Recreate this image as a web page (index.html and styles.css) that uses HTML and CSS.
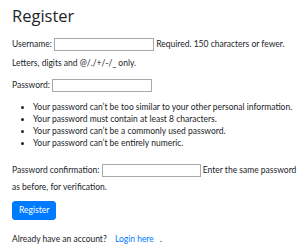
FILE: index.html
```html
<!DOCTYPE html>
<html>
<head>
<meta charset="utf-8">
<link rel="stylesheet" href="styles.css">
</head>
<body>
<div class="page">
  <h2 class="title">Register</h2>
  <form class="form">
    <p class="field"><label>Username:</label> <input type="text" class="input input-user"> <span class="help">Required. 150 characters or fewer. Letters, digits and @/./+/-/_ only.</span></p>
    <p class="field field-pass"><label>Password:</label> <input type="password" class="input input-pass"></p>
    <ul class="rules">
      <li>Your password can’t be too similar to your other personal information.</li>
      <li>Your password must contain at least 8 characters.</li>
      <li>Your password can’t be a commonly used password.</li>
      <li>Your password can’t be entirely numeric.</li>
    </ul>
    <p class="field field-conf"><label>Password confirmation:</label> <input type="password" class="input input-conf"> <span class="help">Enter the same password as before, for verification.</span></p>
    <button type="button" class="btn">Register</button>
  </form>
  <p class="footer">Already have an account? <a class="link" href="#">Login here</a> .</p>
</div>
</body>
</html>
```
FILE: styles.css
```css
html, body { margin: 0; padding: 0; background: #fff; }
body {
  font-family: "Lato", "Noto Sans", sans-serif;
  font-size: 8.5px;
  line-height: 1.5;
  color: #212529;
}
.page { padding: 6px 0 0 12px; }
.title {
  font-family: "Open Sans", sans-serif;
  font-size: 16.5px;
  font-weight: 500;
  line-height: 1.2;
  margin: 0 0 9px 0;
}
.form { margin: 0; }
.field { margin: 0 0 3px 0; line-height: 19px; }
.field-pass { margin-bottom: 2px; }
.field-conf { line-height: 17px; margin-bottom: 2px; }
.input {
  box-sizing: border-box;
  height: 13px;
  border: 1px solid #a9a9a9;
  padding: 0 2px;
  margin: 0;
  vertical-align: middle;
  font-size: 8px;
}
.input-user { width: 100px; }
.input-pass { width: 100px; }
.input-conf { width: 99px; }
.rules { margin: 6.5px 0 12.5px 0; padding-left: 21px; line-height: 12px; }
.btn {
  display: block;
  background: #007bff;
  color: #fff;
  border: 1px solid #007bff;
  border-radius: 3px;
  font-family: inherit;
  font-size: 8.5px;
  height: 19px;
  padding: 0 6px;
  margin: 5px 0 0 0;
}
.footer { margin: 13.5px 0 0 0; line-height: 13px; }
.link { color: #007bff; text-decoration: none; margin-left: 6px; margin-right: 4px; }
```
